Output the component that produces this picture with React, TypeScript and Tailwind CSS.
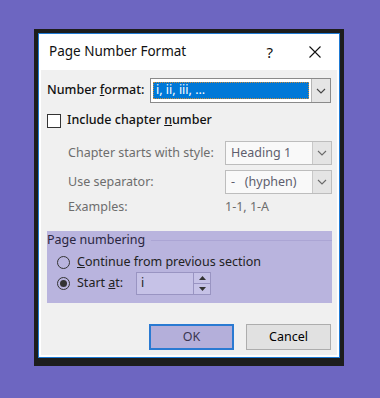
import type { FC, ReactNode } from "react";

const Chevron: FC<{ color?: string }> = ({ color = "#444" }) => (
  <svg width="10" height="6" viewBox="0 0 10 6" fill="none">
    <path d="M1 1 L5 5 L9 1" stroke={color} strokeWidth="1.1" />
  </svg>
);

interface ComboProps {
  children: ReactNode;
  disabled?: boolean;
  className?: string;
}

const Combo: FC<ComboProps> = ({ children, disabled, className = "" }) => (
  <div
    className={`flex items-stretch border ${
      disabled ? "border-[#bdbdbd] bg-[#f9f9f9]" : "border-[#8a8a8a] bg-white"
    } ${className}`}
  >
    <div className="flex-1 flex items-center min-w-0">{children}</div>
    <div
      className={`w-[19px] flex items-center justify-center border-l ${
        disabled ? "border-[#c8c8c8] bg-[#e4e4e4]" : "border-[#b5b5b5] bg-[#e5e5e5]"
      }`}
    >
      <Chevron color={disabled ? "#6a6a6a" : "#444"} />
    </div>
  </div>
);

const Radio: FC<{ checked?: boolean }> = ({ checked }) => (
  <div className="w-[13px] h-[13px] rounded-full border border-[#333] flex items-center justify-center">
    {checked && <div className="w-[7px] h-[7px] rounded-full bg-[#333]" />}
  </div>
);

export default function App() {
  return (
    <div
      className="w-[380px] h-[398px] bg-[#6d66c1] pt-[29px] pl-[34px] text-[12.5px] text-[#111]"
      style={{ fontFamily: '"Noto Sans", "Open Sans", sans-serif' }}
    >
      {/* window frame with shadow */}
      <div className="w-[310px] bg-[#1d1d1d] pt-[4px] pl-[4px] pr-[4px] pb-[8px]">
        <div className="border border-[#1f7ad3] bg-white px-[2px] pb-[2px]">
          {/* title bar */}
          <div className="h-[36px] flex items-center pl-[8px]">
            <span className="text-[13.5px] leading-none">Page Number Format</span>
            <span className="ml-auto text-[15px] leading-none mr-[36px]">?</span>
            <svg width="12" height="12" viewBox="0 0 12 12" className="mr-[16px]">
              <path d="M0.5 0.5 L11.5 11.5 M11.5 0.5 L0.5 11.5" stroke="#111" strokeWidth="1.1" />
            </svg>
          </div>

          {/* body */}
          <div className="bg-[#f0f0f0] pl-[6px] pr-[5px] pt-[8px] pb-[5px]">
            <div className="h-[25px] flex items-center">
              <span className="w-[103px] font-medium">
                Number <span className="underline">f</span>ormat:
              </span>
              <Combo className="w-[181px] h-[25px]">
                <div className="ml-[2px] mr-[2px] h-[17px] flex-1 bg-[#0078d7] border border-dotted border-[#c98b3a] flex items-center pl-[2px] text-white leading-none">
                  i, ii, iii, ...
                </div>
              </Combo>
            </div>

            <div className="mt-[10px] h-[15px] flex items-center gap-[6px]">
              <div className="w-[14px] h-[14px] border border-[#333] bg-white" />
              <span className="font-medium">
                Include chapter <span className="underline">n</span>umber
              </span>
            </div>

            <div className="mt-[13px] ml-[21px] flex flex-col text-[#6d6d6d]">
              <div className="h-[24px] flex items-center">
                <span className="w-[157px]">Chapter starts with style:</span>
                <Combo disabled className="w-[107px] h-[24px]">
                  <span className="pl-[5px] text-[#5e5e6e]">Heading 1</span>
                </Combo>
              </div>
              <div className="mt-[5px] h-[24px] flex items-center">
                <span className="w-[157px]">Use separator:</span>
                <Combo disabled className="w-[107px] h-[24px]">
                  <span className="pl-[5px] text-[#5e5e6e] whitespace-pre">-   (hyphen)</span>
                </Combo>
              </div>
              <div className="mt-[4px] h-[18px] flex items-center">
                <span className="w-[157px]">Examples:</span>
                <span>1-1, 1-A</span>
              </div>
            </div>

            {/* page numbering group */}
            <div className="mt-[15px] h-[72px] bg-[#b9b4de] flex flex-col">
              <div className="h-[18px] flex items-center text-[#2a2640]">
                <span className="leading-none">Page numbering</span>
                <div className="flex-1 h-px bg-[#aba5d4] ml-[6px]" />
              </div>
              <div className="mt-[5px] h-[16px] flex items-center pl-[10px] gap-[7px] text-[#222]">
                <Radio />
                <span>
                  <span className="underline">C</span>ontinue from previous section
                </span>
              </div>
              <div className="mt-[1px] h-[24px] flex items-center pl-[10px] text-[#222]">
                <Radio checked />
                <span className="ml-[7px] w-[59px]">
                  Start <span className="underline">a</span>t:
                </span>
                <div className="w-[75px] h-[23px] border border-[#9994c2] bg-[#c6c2e7] flex items-stretch">
                  <span className="flex-1 flex items-center pl-[4px]">i</span>
                  <div className="w-[17px] flex flex-col border-l border-[#9994c2]">
                    <div className="flex-1 flex items-center justify-center border-b border-[#9994c2]">
                      <svg width="7" height="4" viewBox="0 0 7 4">
                        <path d="M0 4 L3.5 0 L7 4 Z" fill="#333" />
                      </svg>
                    </div>
                    <div className="flex-1 flex items-center justify-center">
                      <svg width="7" height="4" viewBox="0 0 7 4">
                        <path d="M0 0 L3.5 4 L7 0 Z" fill="#333" />
                      </svg>
                    </div>
                  </div>
                </div>
              </div>
            </div>

            {/* buttons */}
            <div className="mt-[21px] h-[26px] flex justify-end gap-[12px] pr-[1px]">
              <button className="w-[85px] h-[26px] bg-[#b4afda] border-2 border-[#2a7ad2] text-[#3a3650]">
                OK
              </button>
              <button className="w-[85px] h-[26px] bg-[#e1e1e1] border border-[#adadad] text-black">
                Cancel
              </button>
            </div>
          </div>
        </div>
      </div>
    </div>
  );
}
